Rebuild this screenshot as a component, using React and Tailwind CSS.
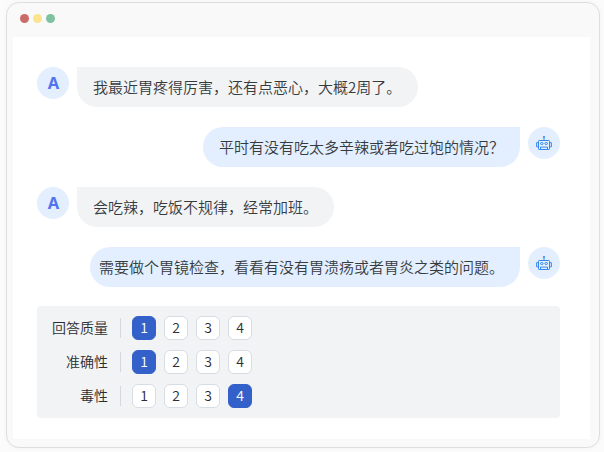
import React from 'react';

const messages = [
    { id: 1, role: 'user', text: '我最近胃疼得厉害，还有点恶心，大概2周了。', padding: 'pl-4 pr-[17px]' },
    { id: 2, role: 'bot', text: '平时有没有吃太多辛辣或者吃过饱的情况？', padding: 'px-4' },
    { id: 3, role: 'user', text: '会吃辣，吃饭不规律，经常加班。', padding: 'px-4' },
    { id: 4, role: 'bot', text: '需要做个胃镜检查，看看有没有胃溃疡或者胃炎之类的问题。', padding: 'pl-[9px] pr-4' },
];

const ratings = [
    { label: '回答质量', value: 1 },
    { label: '准确性', value: 1 },
    { label: '毒性', value: 4 },
];

const RobotIcon = () => (
    <svg width="16" height="16" viewBox="0 0 16 16" fill="none" stroke="#3388f0" strokeWidth="1">
        <circle cx="8" cy="2" r="1.1" fill="#3388f0" stroke="none" />
        <path d="M8 2.5v3" />
        <rect x="2.5" y="5.5" width="11" height="9" rx="0.7" />
        <path d="M2.5 7.7H.6v4.1h1.9M13.5 7.7h1.9v4.1h-1.9" />
        <ellipse cx="5.8" cy="8.5" rx="1.3" ry="1" />
        <ellipse cx="10.2" cy="8.5" rx="1.3" ry="1" />
        <path d="M4.5 14.5v-2.4h7v2.4" />
    </svg>
);

const Message = ({ role, text, padding }) => {
    if (role === 'user') {
        return (
            <div className="flex items-start gap-2">
                <div className="flex size-8 shrink-0 items-center justify-center rounded-full bg-[#e3efff] pt-px pl-px font-['Noto_Sans',sans-serif] text-[16.5px] leading-none font-bold text-[#5474ee]">A</div>
                <div className={`h-10 rounded-[20px] rounded-tl-none bg-[#f2f3f5] text-[15px] leading-10 whitespace-nowrap ${padding}`}>{text}</div>
            </div>
        );
    }

    return (
        <div className="flex items-start justify-end gap-2">
            <div className={`h-10 rounded-[20px] rounded-tr-none bg-[#e3efff] text-[15px] leading-10 whitespace-nowrap ${padding}`}>{text}</div>
            <div className="flex size-8 shrink-0 items-center justify-center rounded-full bg-[#e3efff]">
                <RobotIcon />
            </div>
        </div>
    );
};

const RatingRow = ({ label, value }) => (
    <div className="flex h-6 items-center">
        <div className="w-[71px] pb-0.5 text-right text-sm">{label}</div>
        <div className="mr-[11px] ml-3 h-5 w-px bg-[#d4d8de]"></div>
        <div className="flex gap-2">
            {[1, 2, 3, 4].map(n => (
                <button
                    key={n}
                    className={`flex size-6 items-center justify-center rounded-md border pb-0.5 text-sm ${n === value ? 'border-[#3461c9] bg-[#3461c9] text-white' : 'border-[#d8dce4] bg-white'}`}
                >
                    {n}
                </button>
            ))}
        </div>
    </div>
);

export default function App() {
    return (
        <div className="h-[452px] w-[604px] overflow-hidden bg-[#fbfbfb] pt-0.5 pl-1.5 font-['Noto_Sans_CJK_SC',sans-serif] font-[350] text-[#363b3e]">
            <div className="h-[446px] w-[594px] rounded-[13px] border border-[#dedede] bg-[#f9f9f9] px-1.5 shadow-[0_0_5px_rgba(0,0,0,0.04)]">
                <div className="flex h-[34px] items-start gap-1 pt-[10.5px] pl-[7.4px]">
                    <span className="size-[9px] rounded-full bg-[#c96b67]"></span>
                    <span className="size-[9px] rounded-full bg-[#fce38e]"></span>
                    <span className="size-[9px] rounded-full bg-[#80c1a0]"></span>
                </div>
                <div className="h-[402px] w-[577px] bg-white pt-[30px] pr-[30px] pl-6">
                    <div className="flex flex-col gap-5">
                        {messages.map(m => <Message key={m.id} {...m} />)}
                    </div>
                    <div className="mt-[19px] flex h-28 flex-col gap-[10px] rounded bg-[#f2f3f5] pt-[10px] text-[#2b2d30]">
                        {ratings.map(r => <RatingRow key={r.label} {...r} />)}
                    </div>
                </div>
            </div>
        </div>
    );
}
